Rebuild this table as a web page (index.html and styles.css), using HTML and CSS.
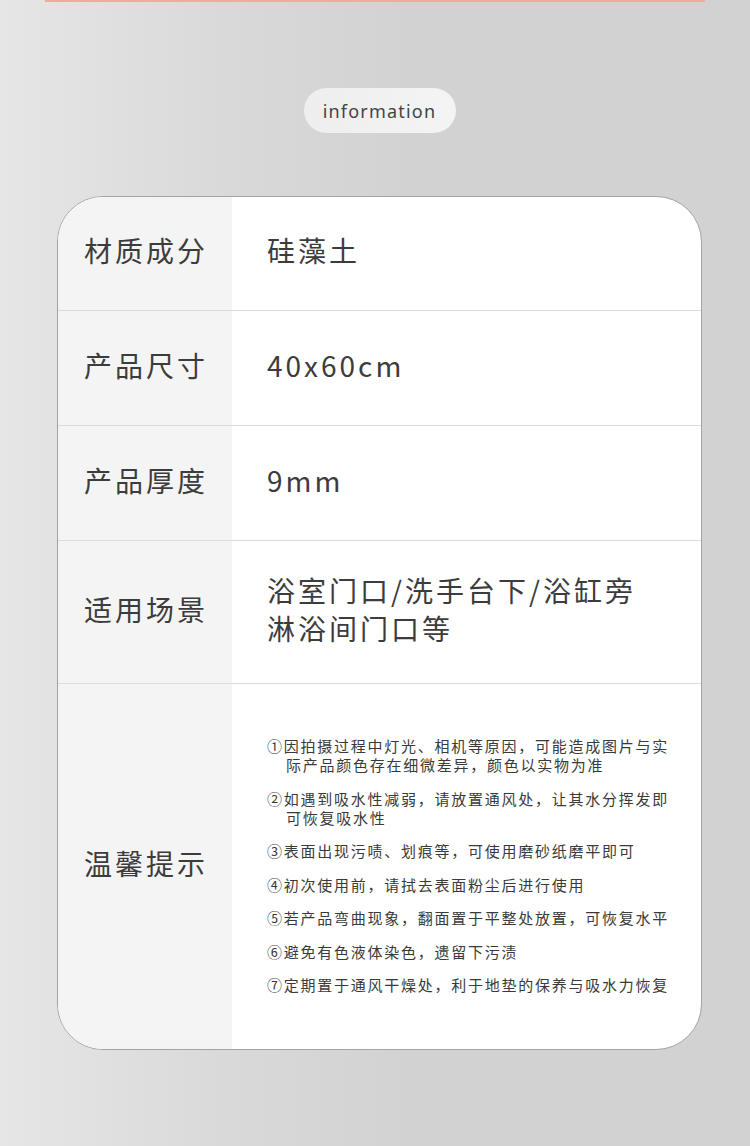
FILE: index.html
```html
<!DOCTYPE html>
<html lang="zh-CN">
<head>
<meta charset="utf-8">
<link rel="stylesheet" href="styles.css">
</head>
<body>
<div class="page">
  <div class="topline"></div>
  <div class="pill-wrap"><div class="pill">information</div></div>
  <div class="card">
    <div class="row r1">
      <div class="label">材质成分</div>
      <div class="value">硅藻土</div>
    </div>
    <div class="row r2">
      <div class="label">产品尺寸</div>
      <div class="value">40x60cm</div>
    </div>
    <div class="row r3">
      <div class="label">产品厚度</div>
      <div class="value">9mm</div>
    </div>
    <div class="row r4">
      <div class="label">适用场景</div>
      <div class="value multi">浴室门口/洗手台下/浴缸旁<br>淋浴间门口等</div>
    </div>
    <div class="row r5">
      <div class="label">温馨提示</div>
      <div class="value notes">
        <p>①因拍摄过程中灯光、相机等原因，可能造成图片与实<br>际产品颜色存在细微差异，颜色以实物为准</p>
        <p>②如遇到吸水性减弱，请放置通风处，让其水分挥发即<br>可恢复吸水性</p>
        <p>③表面出现污啧、划痕等，可使用磨砂纸磨平即可</p>
        <p>④初次使用前，请拭去表面粉尘后进行使用</p>
        <p>⑤若产品弯曲现象，翻面置于平整处放置，可恢复水平</p>
        <p>⑥避免有色液体染色，遗留下污渍</p>
        <p>⑦定期置于通风干燥处，利于地垫的保养与吸水力恢复</p>
      </div>
    </div>
  </div>
</div>
</body>
</html>
```

FILE: styles.css
```css
html, body {
  margin: 0;
  padding: 0;
}
body {
  width: 750px;
  height: 1146px;
  overflow: hidden;
  background: linear-gradient(to right, #e6e6e6 0%, #d9d9d9 30%, #d2d2d2 55%, #d2d2d2 100%);
  font-family: "Noto Sans CJK SC", "Noto Sans", sans-serif;
  color: #3a3a3a;
}
.page {
  position: relative;
  width: 750px;
  height: 1146px;
  display: flex;
  flex-direction: column;
  align-items: center;
}
.topline {
  width: 660px;
  height: 2px;
  background: #f3aa9c;
  align-self: flex-start;
  margin-left: 45px;
}
.pill-wrap {
  margin-top: 86px;
  display: flex;
  justify-content: center;
  width: 100%;
  padding-left: 9px;
  box-sizing: border-box;
}
.pill {
  width: 152px;
  height: 45px;
  border-radius: 23px;
  background: linear-gradient(to right, #eeeeee, #f4f4f4);
  display: flex;
  align-items: center;
  justify-content: center;
  font-family: "Noto Sans", sans-serif;
  font-size: 18px;
  letter-spacing: 1.2px;
  color: #444;
}
.card {
  margin-top: 63px;
  margin-left: 9px;
  width: 645px;
  box-sizing: border-box;
  border: 1px solid #a3a3a3;
  border-radius: 46px;
  overflow: hidden;
  background: #fff;
}
.row {
  display: flex;
  border-bottom: 1px solid #dcdcdc;
}
.row:last-child {
  border-bottom: none;
}
.r1 { height: 113px; }
.r2 { height: 114px; }
.r3 { height: 114px; }
.r4 { height: 142px; }
.r5 { height: 365px; }
.label {
  width: 174px;
  flex: none;
  background: #f4f4f4;
  box-sizing: border-box;
  padding-left: 26px;
  padding-bottom: 7px;
  display: flex;
  align-items: center;
  font-size: 28px;
  letter-spacing: 3px;
  color: #3c3c3c;
}
.value {
  flex: 1;
  padding-left: 35px;
  padding-bottom: 7px;
  box-sizing: border-box;
  display: flex;
  align-items: center;
  font-size: 28px;
  letter-spacing: 3px;
  color: #3c3c3c;
}
.value.multi {
  line-height: 38px;
}
.notes {
  flex-direction: column;
  align-items: flex-start;
  justify-content: center;
  font-size: 15px;
  letter-spacing: 1.75px;
  line-height: 19px;
  color: #3a3a3a;
  padding-bottom: 3px;
}
.notes p {
  margin: 0 0 14.5px 0;
  padding-left: 19px;
  text-indent: -19px;
  white-space: nowrap;
}
.notes p:last-child {
  margin-bottom: 0;
}
```
